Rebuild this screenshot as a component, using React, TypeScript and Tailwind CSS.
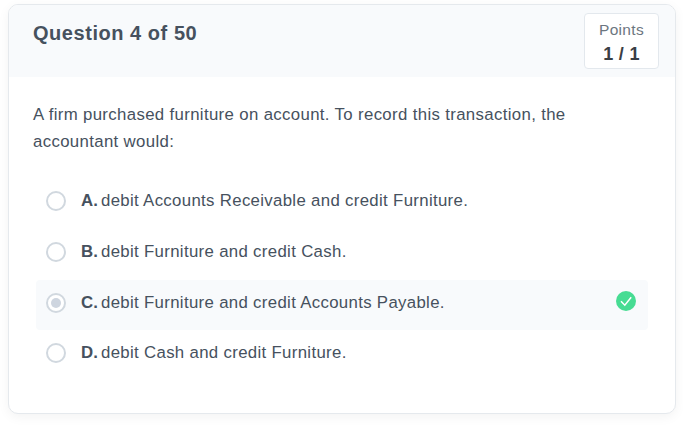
const answers = [
  { key: "A", text: "debit Accounts Receivable and credit Furniture." },
  { key: "B", text: "debit Furniture and credit Cash." },
  { key: "C", text: "debit Furniture and credit Accounts Payable.", correct: true },
  { key: "D", text: "debit Cash and credit Furniture." },
];

function Check() {
  return (
    <svg className="mb-1" width="20" height="20" viewBox="0 0 20 20" fill="none">
      <circle cx="10" cy="10" r="10" fill="#47dc93" />
      <path d="M5 10.3L8.8 14.2L15.2 6.2" stroke="white" strokeWidth="1.5" />
    </svg>
  );
}

export default function App() {
  return (
    <div className="h-[425px] w-[683px] overflow-hidden bg-white px-2 pt-1 font-['Liberation_Sans',Arial,sans-serif] text-[#46515e]">
      <main className="h-[410px] w-[668px] overflow-hidden rounded-[10px] border border-[#e5e9ed] bg-white shadow-[0_3px_12px_rgba(0,0,0,0.05)]">
        <header className="flex h-[72px] items-start justify-between bg-[#f8fafc] pl-6 pr-4 pt-2">
          <h1 className="mt-2 text-[20px] font-bold leading-6 tracking-[0.54px]">Question 4 of 50</h1>
          <div className="flex h-14 w-[75px] flex-col items-center rounded border border-[#e3e8ed] bg-white pt-[5px]">
            <span className="text-[15.5px] leading-[22px] tracking-[0.3px] text-[#6c7680]">Points</span>
            <span className="text-[18px] font-bold leading-[26px] tracking-[0.3px] text-[#3a3e44]">1 / 1</span>
          </div>
        </header>
        <p className="mt-6 px-6 text-[16.8px] leading-[27px] tracking-[0.35px]">
          A firm purchased furniture on account. To record this transaction, the<br />accountant would:
        </p>
        <div className="ml-[27px] mt-[23px] w-[612px]">
          {answers.map(({ key, text, correct }) => (
            <label key={key} className={`flex h-[50px] items-center rounded pb-1 pl-[10px] pr-3 text-[16.8px] leading-[26px] ${correct ? "bg-[#f8fafc]" : "mb-px"}`}>
              <span className="flex size-5 items-center justify-center rounded-full border-2 border-[#d1d8df] bg-white">
                {correct && <span className="size-[10px] rounded-full bg-[#ced5df]" />}
              </span>
              <b className="ml-[15px] w-5 tracking-[0.2px]">{key}.</b>
              <span className="flex-1 tracking-[0.33px]">{text}</span>
              {correct && <Check />}
            </label>
          ))}
        </div>
      </main>
    </div>
  );
}
